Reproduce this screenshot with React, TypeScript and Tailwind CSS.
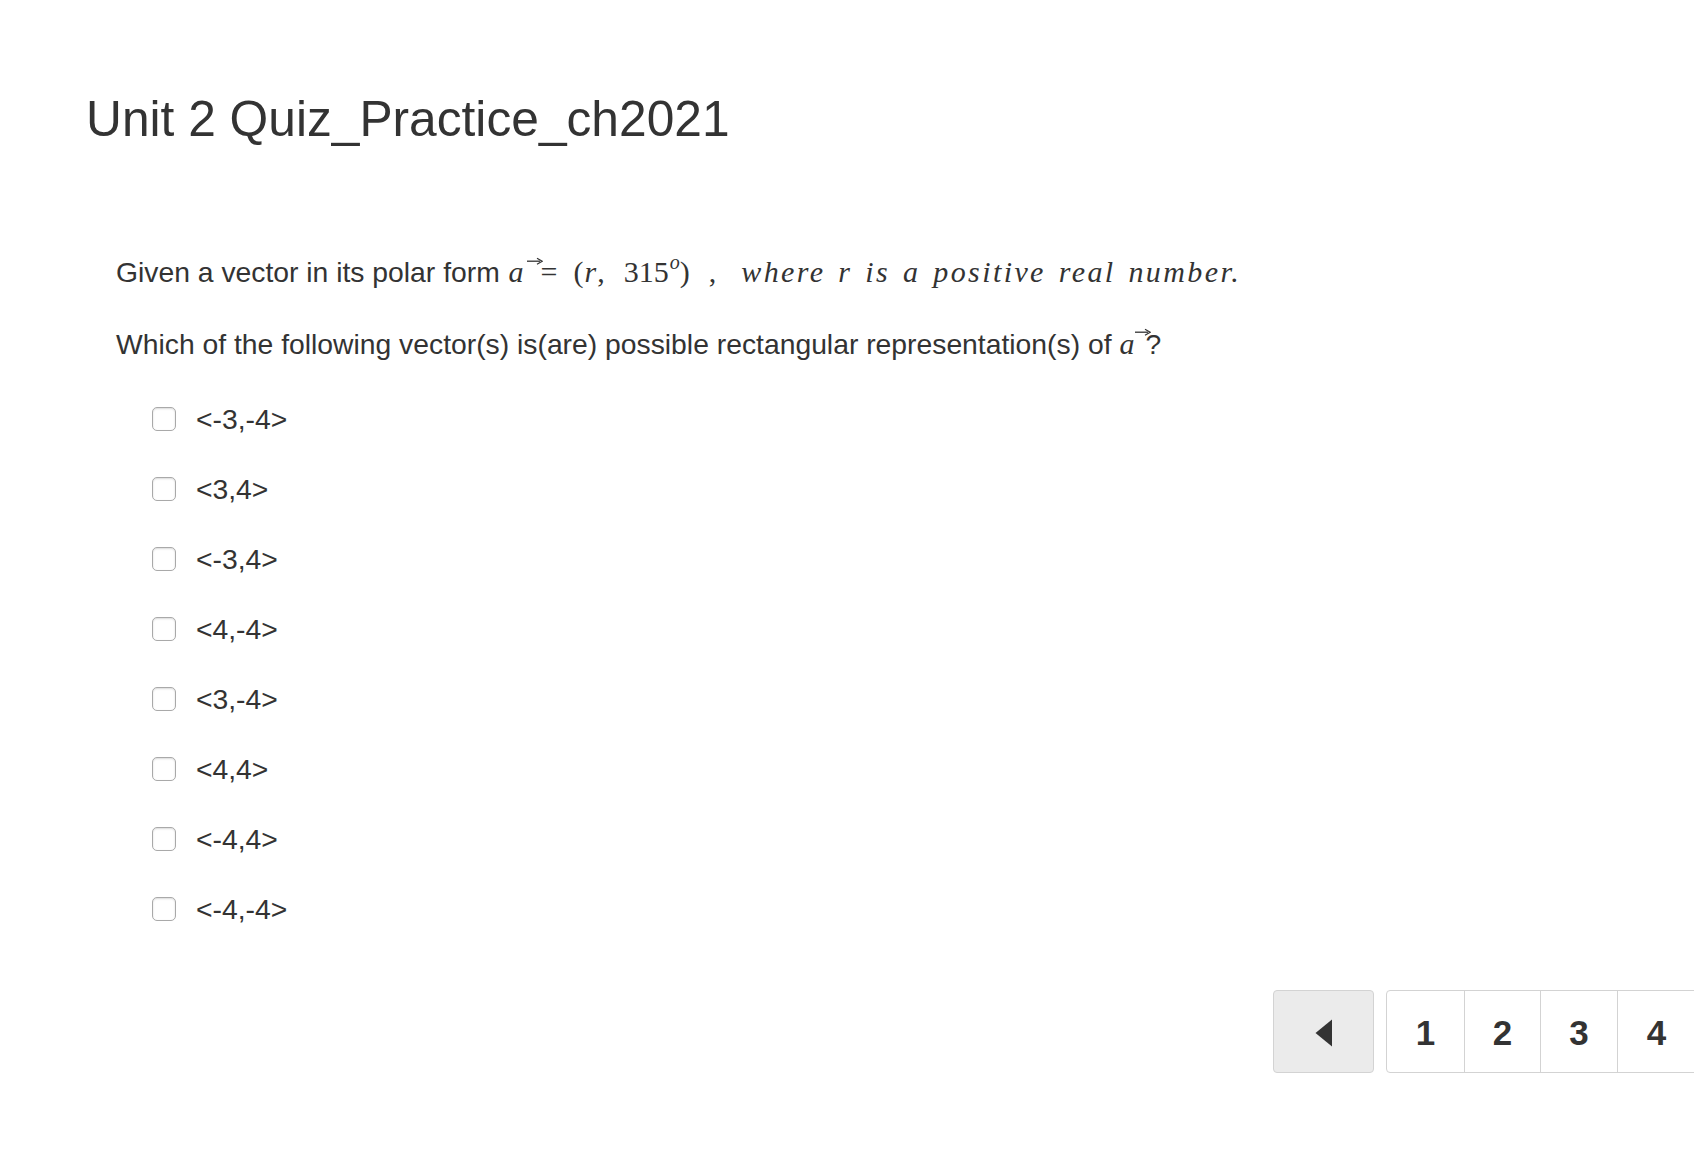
import React from "react";

const sans = { fontFamily: '"Liberation Sans", Arial, Helvetica, sans-serif' };

function VecArrow({ className = "" }: { className?: string }) {
  return (
    <svg className={className} width="16" height="8" viewBox="0 0 16 8" aria-hidden="true">
      <path d="M0 4.2 H13" stroke="#333" strokeWidth="1.3" fill="none" />
      <path d="M10 1.2 L15.2 4.2 L10 7.2" stroke="#333" strokeWidth="1.2" fill="none" />
    </svg>
  );
}

function Checkbox() {
  return (
    <span className="inline-block w-[24px] h-[24px] rounded-[5px] border border-[#a9a9a9] bg-white shadow-[inset_0_1px_2px_rgba(0,0,0,0.15)] shrink-0" />
  );
}

const options = ["<-3,-4>", "<3,4>", "<-3,4>", "<4,-4>", "<3,-4>", "<4,4>", "<-4,4>", "<-4,-4>"];

export default function App() {
  return (
    <div className="w-full min-h-[1160px] bg-white text-[#333] overflow-hidden" style={sans}>
      <div className="pt-[92px] pl-[86px]">
        <h1 className="text-[49.7px] leading-[55px] font-normal">Unit 2 Quiz_Practice_ch2021</h1>

        <div className="pl-[30px] mt-[105px] text-[28.3px] leading-[40px]">
          <p className="whitespace-nowrap">
            Given a vector in its polar form{" "}
            <span className="font-['Liberation_Serif',serif] text-[30px]">
              <span className="relative italic ml-[1px]">
                a
                <VecArrow className="absolute left-[18px] top-[2px]" />
              </span>
              <span className="ml-[17px]">=</span>
              <span className="ml-[16px]">(</span>
              <span className="italic ml-[1px]">r</span>
              <span className="ml-[1px]">,</span>
              <span className="ml-[19px]">315</span>
              <span className="inline-block italic text-[20px] leading-none relative top-[-13px] ml-[1px]">o</span>
              <span className="ml-[0px]">)</span>
              <span className="ml-[19px]">,</span>
              <span className="italic ml-[25px] tracking-[2.4px] [word-spacing:3px]">where r is a positive real number.</span>
            </span>
          </p>
          <p className="mt-[32px] whitespace-nowrap">
            Which of the following vector(s) is(are) possible rectangular representation(s) of{" "}
            <span className="font-['Liberation_Serif',serif] text-[30px] italic">a</span>
            <VecArrow className="inline-block align-top mt-[4px] ml-[1px] mr-[-6px]" />
            ?
          </p>

          <div className="mt-[20px] pl-[36px]">
            {options.map((o) => (
              <label key={o} className="flex items-center h-[70px] gap-[20px]">
                <Checkbox />
                <span>{o}</span>
              </label>
            ))}
          </div>
        </div>
      </div>

      <div className="flex justify-end mt-[46px] mr-[-2px]">
        <button className="w-[101px] h-[83px] rounded-[4px] border border-[#d3d3d3] bg-[#ebebeb] flex items-center justify-center pt-[3px]">
          <svg width="18" height="28" viewBox="0 0 18 28" aria-hidden="true">
            <path d="M17 0.5 L0.5 14 L17 27.5 Z" fill="#333" />
          </svg>
        </button>
        <div className="ml-[12px] flex h-[83px] rounded-l-[4px] border border-[#d3d3d3] bg-white text-[35px] font-bold">
          <div className="w-[78px] flex items-center justify-center pt-[4px] border-r border-[#d3d3d3]">1</div>
          <div className="w-[76px] flex items-center justify-center pt-[4px] border-r border-[#d3d3d3]">2</div>
          <div className="w-[77px] flex items-center justify-center pt-[4px] border-r border-[#d3d3d3]">3</div>
          <div className="w-[77px] flex items-center justify-center pt-[4px]">4</div>
        </div>
      </div>
    </div>
  );
}
